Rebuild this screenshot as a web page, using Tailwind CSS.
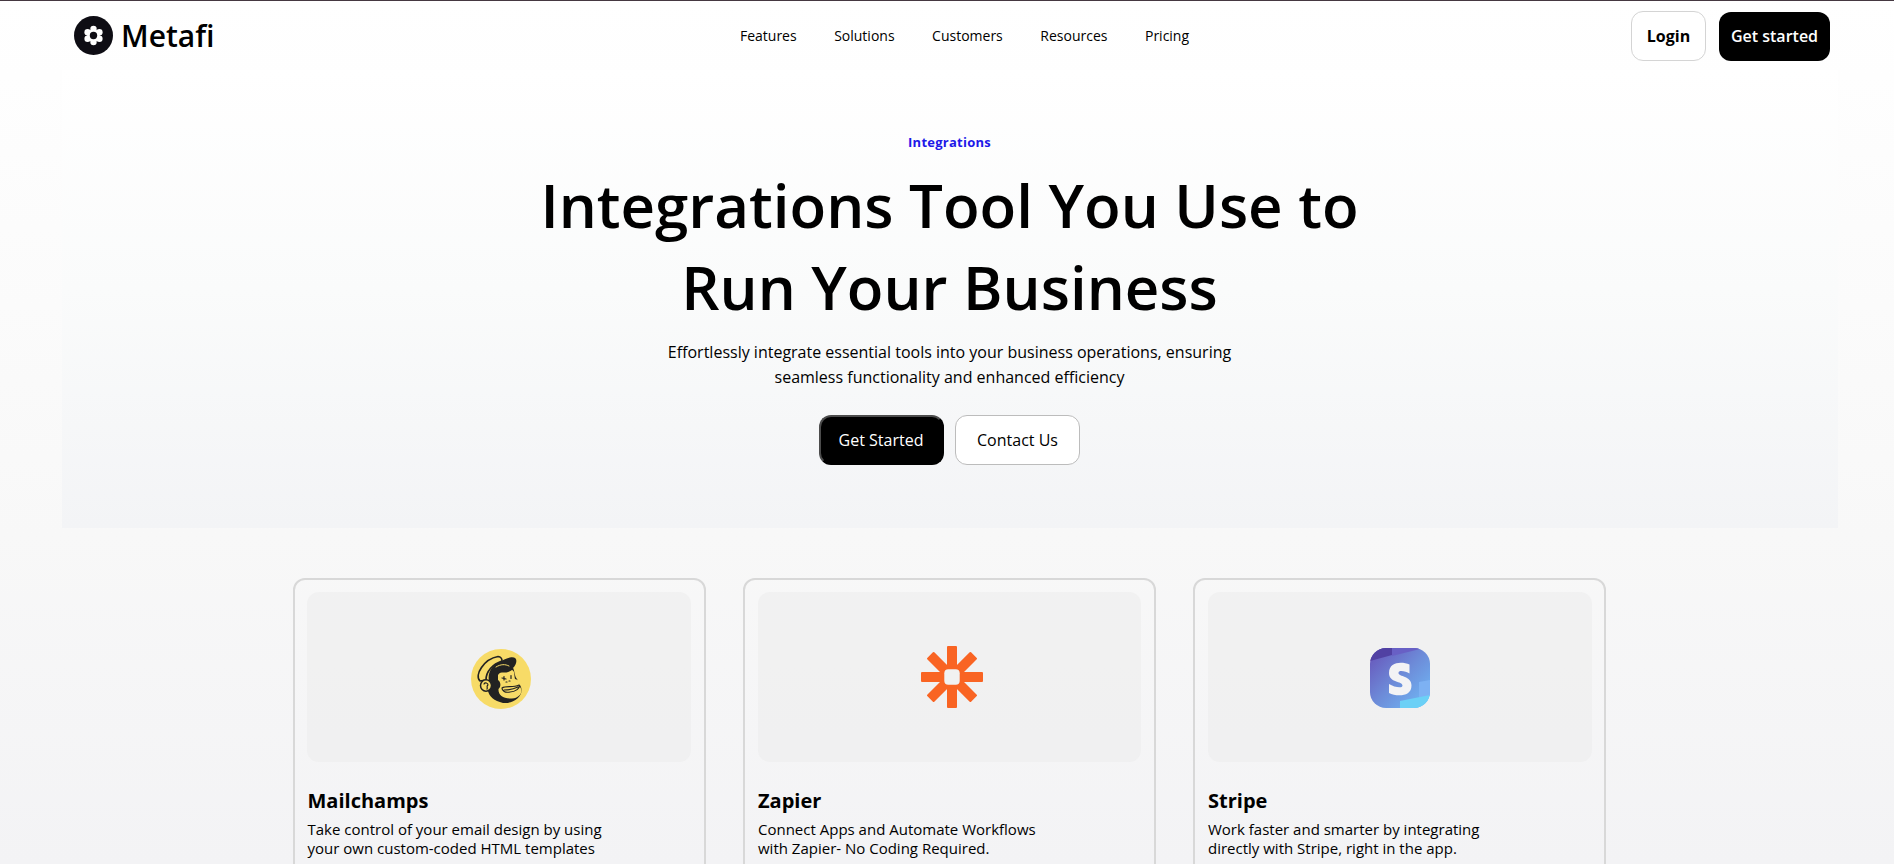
<!DOCTYPE html>
<html lang="en">
<head>
<meta charset="utf-8">
<title>Metafi</title>
<script src="https://cdn.jsdelivr.net/npm/@tailwindcss/browser@4"></script>
</head>
<body class="h-[864px] overflow-hidden bg-linear-to-b from-white via-[#f8f8f8] via-62% to-[#f3f3f5] font-['Open_Sans',sans-serif] text-black">
<div class="h-px bg-[#453841]"></div>
<header class="flex h-[69px] items-start justify-between pl-[74px] pr-[64px]">
  <a class="flex h-[70px] w-[300px] items-center gap-[8px]">
    <svg class="mb-px size-[39px]" viewBox="0 0 39 39"><circle cx="19.5" cy="19.5" r="19.5" fill="#0e0d14"/><g fill="#fff"><circle cx="19.5" cy="13" r="3.2"/><circle cx="19.5" cy="26" r="3.2"/><circle cx="13.6" cy="16.2" r="3.2"/><circle cx="25.4" cy="16.2" r="3.2"/><circle cx="13.6" cy="22.8" r="3.2"/><circle cx="25.4" cy="22.8" r="3.2"/><circle cx="19.5" cy="19.5" r="6.3"/></g><circle cx="19.5" cy="19.5" r="3.7" fill="#0e0d14"/></svg>
    <span class="text-[30px] font-semibold leading-none">Metafi</span>
  </a>
  <nav class="ml-[25px] flex h-[70px] items-center gap-[37.5px] text-sm">
    <a>Features</a><a>Solutions</a><a>Customers</a><a>Resources</a><a>Pricing</a>
  </nav>
  <div class="flex h-[70px] w-[300px] items-center justify-end gap-[13px] font-semibold">
    <button class="h-[50px] w-[75px] rounded-xl border border-[#d4d4d4] bg-white font-bold">Login</button>
    <button class="h-[49px] w-[111px] rounded-xl bg-black text-white">Get started</button>
  </div>
</header>
<section class="mx-auto flex h-[458px] w-[1776px] translate-x-[3px] flex-col items-center bg-linear-to-b from-white via-[#fafbfb] via-48% to-[#f3f4f6] pt-[62px] pr-px text-center">
  <p class="text-[13px] font-bold leading-5 tracking-[0.25px] text-[#2018e8]">Integrations</p>
  <h1 class="mt-[12px] w-[900px] text-[60px] font-semibold leading-[82px]">Integrations Tool You Use to<br>Run Your Business</h1>
  <p class="mt-[12px] w-[600px] text-base leading-[25px]">Effortlessly integrate essential tools into your business operations, ensuring seamless functionality and enhanced efficiency</p>
  <div class="mt-[25px] mr-px flex gap-[11px]">
    <button class="h-[50px] w-[125px] rounded-xl border-2 border-t-[#4c4c4c] border-l-[#4c4c4c] border-r-black border-b-black bg-black text-white">Get Started</button>
    <button class="h-[50px] w-[125px] rounded-xl border border-[#bcbcbc] bg-white pl-px">Contact Us</button>
  </div>
</section>
<main class="mt-[50px] ml-[293px] grid h-[286px] w-[1313px] grid-cols-3 gap-[37px] overflow-hidden">
  <article class="h-[360px] rounded-xl border-2 border-[#d8d8d8] p-3">
    <div class="flex h-[170px] w-[384px] items-center justify-center rounded-xl bg-[#ebebec]/50">
      <svg class="mt-[4px] ml-[3px] size-[60px]" viewBox="0 0 60 60" fill="none" stroke-linecap="round" stroke-linejoin="round">
        <circle cx="30" cy="30" r="30" fill="#f7db67"/>
        <path d="M18 32C16 23 22 15 29 13L41 17C44 21 43 27 46 30L50 38C53 48 42 55 32 54C23 52 18 47 17 42Z" fill="#222"/>
        <path d="M27 26C30 21 34 26 41 21C44 22 43 26 44 30C49 31 50 35 48 37C53 41 50 49 41 49.5C32 50 27 46 27.5 40C31 37 29 32 27 31Z" fill="#f7db67"/>
        <path d="M9 32C3 26 13 10 27 7.5C31 8 31 10 31 12C22 15 15 22 15 31Z" fill="#f7db67" stroke="#222" stroke-width="1.7"/>
        <path d="M24 17C30 13 32 10 39 8.5C48 7 46 15 42 19C37 16 30 17 24 20Z" fill="#222"/>
        <path d="M25 18C30 15 34 15 38 17" stroke="#f7db67" stroke-width="1"/>
        <ellipse cx="15" cy="36.5" rx="5.5" ry="5.8" fill="#f7db67" stroke="#222" stroke-width="1.5"/>
        <path d="M13 35C14 33 17 34 17 36C15 37 17 39 16 40M33 27.5V31M31 29L35 30M40 26.5V29.5M38 32H39M35 33H36M31 39C35 36.5 42 39 48 36C50 39 44 43 39 43C34 44 31 42 31 39ZM33 41C38 41 43 40 47 38" stroke="#222" stroke-width="1.2"/>
      </svg>
    </div>
    <h2 class="mt-[25px] ml-[0.5px] text-xl font-bold leading-7">Mailchamps</h2>
    <p class="mt-[5px] ml-[0.5px] w-[340px] text-[15px] leading-[19px]">Take control of your email design by using<br>your own custom-coded HTML templates</p>
  </article>
  <article class="h-[360px] rounded-xl border-2 border-[#d8d8d8] py-3 pr-3 pl-[13px]">
    <div class="flex h-[170px] w-[383px] items-center justify-center rounded-xl bg-[#ebebec]/50">
      <svg class="ml-[5px] size-[62px]" viewBox="0 0 62 62"><g fill="#f96423"><rect x="26" width="10" height="62" rx="1"/><rect y="26" width="62" height="10" rx="1"/><rect x="26" width="10" height="62" rx="1" transform="rotate(45 31 31)"/><rect x="26" width="10" height="62" rx="1" transform="rotate(-45 31 31)"/><circle cx="31" cy="31" r="11"/></g><rect x="23.3" y="23.3" width="15.4" height="15.4" rx="4" fill="#f1f1f1"/></svg>
    </div>
    <h2 class="mt-[25px] text-xl font-bold leading-7">Zapier</h2>
    <p class="mt-[5px] w-[340px] text-[15px] leading-[19px]">Connect Apps and Automate Workflows<br>with Zapier- No Coding Required.</p>
  </article>
  <article class="h-[360px] rounded-xl border-2 border-[#d8d8d8] py-3 pr-3 pl-[13px]">
    <div class="flex h-[170px] w-[384px] items-center justify-center rounded-xl bg-[#ebebec]/50">
      <svg class="mt-[2px] size-[60px]" viewBox="0 0 60 60">
        <defs><linearGradient id="g" x1="0" y1="0" x2="1" y2="1"><stop stop-color="#6751b8"/><stop offset=".5" stop-color="#6d8cd9"/><stop offset="1" stop-color="#70bdf8"/></linearGradient><clipPath id="c"><rect width="60" height="60" rx="16"/></clipPath></defs>
        <g clip-path="url(#c)"><path fill="url(#g)" d="M0 0H60V60H0Z"/><path fill="#5141a3" d="M0 0H22V7L0 13Z"/><path fill="#6860c5" d="M22 0H54L22 8Z"/><path fill="#7db1f3" d="M49 34L60 32V48L49 50Z"/><path fill="#6bd0f6" d="M30 53L60 47V60H30Z"/></g>
        <path d="M39.5 16.5V25.5C36 23.5 28.5 21.5 28.5 25C28.5 29 41.5 27.5 41.5 37.5C41.5 49.5 26 48.5 19 45V36C24 39 32.5 41 32.5 37.5C32.5 33 19 35 19 25C19 13.5 32 13.5 39.5 16.5Z" fill="#f3f3f5"/>
      </svg>
    </div>
    <h2 class="mt-[25px] text-xl font-bold leading-7">Stripe</h2>
    <p class="mt-[5px] w-[340px] text-[15px] leading-[19px]">Work faster and smarter by integrating<br>directly with Stripe, right in the app.</p>
  </article>
</main>
</body>
</html>
